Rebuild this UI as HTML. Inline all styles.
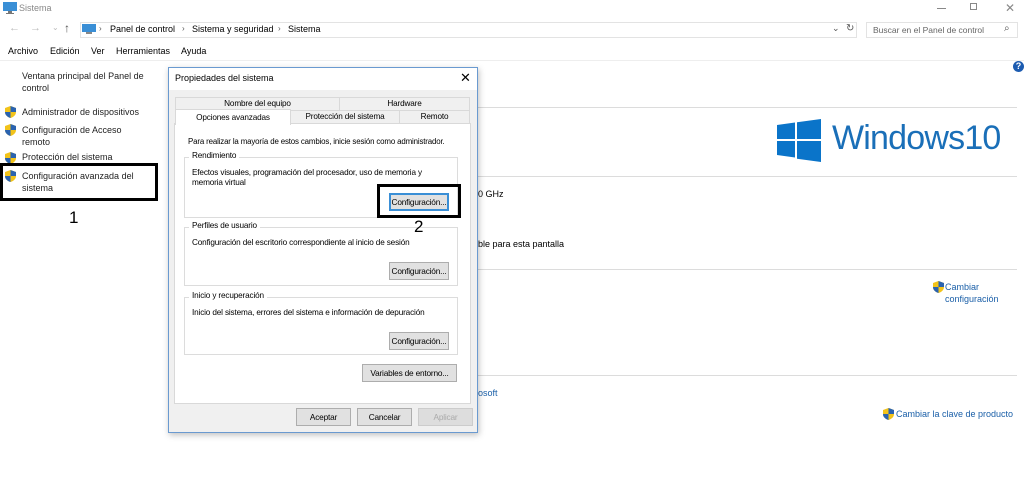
<!DOCTYPE html>
<html><head><meta charset="utf-8"><style>
*{margin:0;padding:0;box-sizing:border-box}
body{width:1024px;height:496px;overflow:hidden;background:#fff;font-family:"Liberation Sans",sans-serif;font-size:9px;color:#000;position:relative}
.a{position:absolute;white-space:nowrap}
.hl{position:absolute;height:1px;background:#dcdcdc}
.lnk{color:#1a5fa8}
.btn{position:absolute;background:#e1e1e1;border:1px solid #adadad;font-size:8.3px;text-align:center;line-height:16px;height:18px;letter-spacing:-0.2px}
.grp{position:absolute;border:1px solid #dcdcdc}
.gl{position:absolute;top:-7px;left:4px;background:#fff;padding:0 3px;font-size:8.5px}
.sh{position:absolute;width:11px;height:12px}
.d{font-size:8.2px;letter-spacing:-0.15px}
</style></head><body>
<svg class="a" style="left:3px;top:2px" width="14" height="12"><rect x="0" y="0" width="14" height="9" fill="#3a8fd6"/><rect x="5" y="9" width="4" height="2" fill="#777"/><rect x="3" y="11" width="8" height="1" fill="#777"/></svg>
<div class="a" style="left:19px;top:3px;color:#888">Sistema</div>
<div class="a" style="left:937px;top:8px;width:9px;height:1px;background:#888"></div>
<div class="a" style="left:970px;top:3px;width:7px;height:7px;border:1px solid #888"></div>
<div class="a" style="left:1005px;top:1px;color:#888;font-size:12px">✕</div>
<div class="a" style="left:9px;top:22px;color:#bbb;font-size:11px">←</div>
<div class="a" style="left:30px;top:22px;color:#bbb;font-size:11px">→</div>
<div class="a" style="left:52px;top:23px;color:#bbb;font-size:8px">⌄</div>
<div class="a" style="left:64px;top:21px;color:#555;font-size:12px">↑</div>
<div class="a" style="left:80px;top:22px;width:777px;height:16px;border:1px solid #e3e3e3"></div>
<svg class="a" style="left:82px;top:24px" width="14" height="11"><rect x="0" y="0" width="14" height="8" fill="#3a8fd6"/><rect x="4" y="8" width="6" height="2" fill="#888"/></svg>
<div class="a" style="left:99px;top:24px;color:#555;font-size:8px">›</div>
<div class="a" style="left:110px;top:24px">Panel de control</div>
<div class="a" style="left:182px;top:24px;color:#555;font-size:8px">›</div>
<div class="a" style="left:192px;top:24px">Sistema y seguridad</div>
<div class="a" style="left:278px;top:24px;color:#555;font-size:8px">›</div>
<div class="a" style="left:288px;top:24px">Sistema</div>
<div class="a" style="left:832px;top:23px;color:#555;font-size:9px">⌄</div>
<div class="a" style="left:846px;top:23px;color:#555;font-size:10px">↻</div>
<div class="a" style="left:866px;top:22px;width:152px;height:16px;border:1px solid #e3e3e3"></div>
<div class="a" style="left:873px;top:25px;color:#666;font-size:8.5px">Buscar en el Panel de control</div>
<div class="a" style="left:1004px;top:23px;color:#555;font-size:10px">⌕</div>
<div class="a" style="left:8px;top:46px">Archivo</div>
<div class="a" style="left:50px;top:46px">Edición</div>
<div class="a" style="left:91px;top:46px">Ver</div>
<div class="a" style="left:116px;top:46px">Herramientas</div>
<div class="a" style="left:181px;top:46px">Ayuda</div>
<div class="hl" style="left:0;top:60px;width:1024px;background:#eee"></div>
<div class="a" style="left:22px;top:70px;line-height:12px;color:#222">Ventana principal del Panel de<br>control</div>
<svg class="sh" style="left:5px;top:106px" viewBox="0 0 11 12"><path d="M5.5 0L11 2v4c0 3-2.5 5-5.5 6C2.5 11 0 9 0 6V2z" fill="#f2c31a"/><path d="M5.5 0L11 2v4H5.5zM0 6h5.5v6C2.5 11 0 9 0 6z" fill="#2a63b0"/></svg>
<div class="a" style="left:22px;top:107px;color:#222">Administrador de dispositivos</div>
<svg class="sh" style="left:5px;top:124px" viewBox="0 0 11 12"><path d="M5.5 0L11 2v4c0 3-2.5 5-5.5 6C2.5 11 0 9 0 6V2z" fill="#f2c31a"/><path d="M5.5 0L11 2v4H5.5zM0 6h5.5v6C2.5 11 0 9 0 6z" fill="#2a63b0"/></svg>
<div class="a" style="left:22px;top:124px;line-height:12px;color:#222">Configuración de Acceso<br>remoto</div>
<svg class="sh" style="left:5px;top:152px" viewBox="0 0 11 12"><path d="M5.5 0L11 2v4c0 3-2.5 5-5.5 6C2.5 11 0 9 0 6V2z" fill="#f2c31a"/><path d="M5.5 0L11 2v4H5.5zM0 6h5.5v6C2.5 11 0 9 0 6z" fill="#2a63b0"/></svg>
<div class="a" style="left:22px;top:152px;color:#222">Protección del sistema</div>
<svg class="sh" style="left:5px;top:170px" viewBox="0 0 11 12"><path d="M5.5 0L11 2v4c0 3-2.5 5-5.5 6C2.5 11 0 9 0 6V2z" fill="#f2c31a"/><path d="M5.5 0L11 2v4H5.5zM0 6h5.5v6C2.5 11 0 9 0 6z" fill="#2a63b0"/></svg>
<div class="a" style="left:22px;top:170px;line-height:12px;color:#222">Configuración avanzada del<br>sistema</div>
<div class="a" style="left:0;top:163px;width:158px;height:38px;border:3px solid #000"></div>
<div class="a" style="left:69px;top:208px;font-size:17px">1</div>
<div class="a" style="left:1013px;top:61px;width:11px;height:11px;border-radius:50%;background:#1c5bb0;color:#fff;font-size:9px;font-weight:bold;text-align:center;line-height:11px">?</div>
<div class="hl" style="left:477px;top:107px;width:540px"></div>
<svg class="a" style="left:777px;top:119px" width="44" height="43"><path d="M0 6L18 3.5V20H0zM20 3.2L44 0V20H20zM0 22H18V38.5L0 36zM20 22H44V43L20 39.8z" fill="#0a74c9"/></svg>
<div class="a" style="left:832px;top:119px;font-size:34px;color:#1a6fb8;letter-spacing:-0.8px">Windows10</div>
<div class="hl" style="left:477px;top:176px;width:540px"></div>
<div class="a" style="left:478px;top:189px">0 GHz</div>
<div class="a" style="left:478px;top:239px">ble para esta pantalla</div>
<div class="hl" style="left:477px;top:269px;width:540px"></div>
<svg class="sh" style="left:933px;top:281px" viewBox="0 0 11 12"><path d="M5.5 0L11 2v4c0 3-2.5 5-5.5 6C2.5 11 0 9 0 6V2z" fill="#f2c31a"/><path d="M5.5 0L11 2v4H5.5zM0 6h5.5v6C2.5 11 0 9 0 6z" fill="#2a63b0"/></svg>
<div class="a lnk" style="left:945px;top:281px;line-height:12px">Cambiar<br>configuración</div>
<div class="hl" style="left:477px;top:375px;width:540px"></div>
<div class="a lnk" style="left:478px;top:388px">osoft</div>
<svg class="sh" style="left:883px;top:408px" viewBox="0 0 11 12"><path d="M5.5 0L11 2v4c0 3-2.5 5-5.5 6C2.5 11 0 9 0 6V2z" fill="#f2c31a"/><path d="M5.5 0L11 2v4H5.5zM0 6h5.5v6C2.5 11 0 9 0 6z" fill="#2a63b0"/></svg>
<div class="a lnk" style="left:896px;top:409px">Cambiar la clave de producto</div>
<div class="a" style="left:168px;top:67px;width:310px;height:366px;background:#f0f0f0;border:1px solid #6a9ad0;box-shadow:1px 2px 6px rgba(0,0,0,.25)">
 <div class="a" style="left:0;top:0;width:308px;height:22px;background:#fff"></div>
 <div class="a" style="left:6px;top:5px;font-size:9px">Propiedades del sistema</div>
 <div class="a" style="left:291px;top:2px;font-size:13px">✕</div>
 <div class="a d" style="left:6px;top:29px;width:165px;height:14px;border:1px solid #d9d9d9;text-align:center;line-height:12px">Nombre del equipo</div>
 <div class="a d" style="left:170px;top:29px;width:131px;height:14px;border:1px solid #d9d9d9;text-align:center;line-height:12px">Hardware</div>
 <div class="a d" style="left:121px;top:42px;width:110px;height:14px;border:1px solid #d9d9d9;text-align:center;line-height:12px">Protección del sistema</div>
 <div class="a d" style="left:230px;top:42px;width:71px;height:14px;border:1px solid #d9d9d9;text-align:center;line-height:12px">Remoto</div>
 <div class="a" style="left:5px;top:55px;width:297px;height:281px;background:#fff;border:1px solid #d9d9d9"></div>
 <div class="a d" style="left:6px;top:41px;width:116px;height:16px;background:#fff;border:1px solid #d9d9d9;border-bottom:none;text-align:center;line-height:15px">Opciones avanzadas</div>
 <div class="a d" style="left:19px;top:69px;font-size:7.9px">Para realizar la mayoría de estos cambios, inicie sesión como administrador.</div>
 <div class="grp" style="left:15px;top:89px;width:274px;height:61px"><div class="gl d">Rendimiento</div>
  <div class="a d" style="left:7px;top:10px;line-height:10px">Efectos visuales, programación del procesador, uso de memoria y<br>memoria virtual</div></div>
 <div class="btn" style="left:220px;top:125px;width:60px;border-color:#3a8fd6;box-shadow:inset 0 0 0 1px #3a8fd6">Configuración...</div>
 <div class="grp" style="left:15px;top:159px;width:274px;height:59px"><div class="gl d">Perfiles de usuario</div>
  <div class="a d" style="left:7px;top:10px">Configuración del escritorio correspondiente al inicio de sesión</div></div>
 <div class="btn" style="left:220px;top:194px;width:60px">Configuración...</div>
 <div class="grp" style="left:15px;top:229px;width:274px;height:58px"><div class="gl d">Inicio y recuperación</div>
  <div class="a d" style="left:7px;top:10px">Inicio del sistema, errores del sistema e información de depuración</div></div>
 <div class="btn" style="left:220px;top:264px;width:60px">Configuración...</div>
 <div class="btn" style="left:193px;top:296px;width:95px">Variables de entorno...</div>
 <div class="btn" style="left:127px;top:340px;width:55px">Aceptar</div>
 <div class="btn" style="left:188px;top:340px;width:55px">Cancelar</div>
 <div class="btn" style="left:249px;top:340px;width:55px;color:#aaa;border-color:#ccc;background:#ddd">Aplicar</div>
</div>
<div class="a" style="left:377px;top:184px;width:84px;height:34px;border:3px solid #000"></div>
<div class="a" style="left:414px;top:217px;font-size:17px">2</div>
</body></html>
